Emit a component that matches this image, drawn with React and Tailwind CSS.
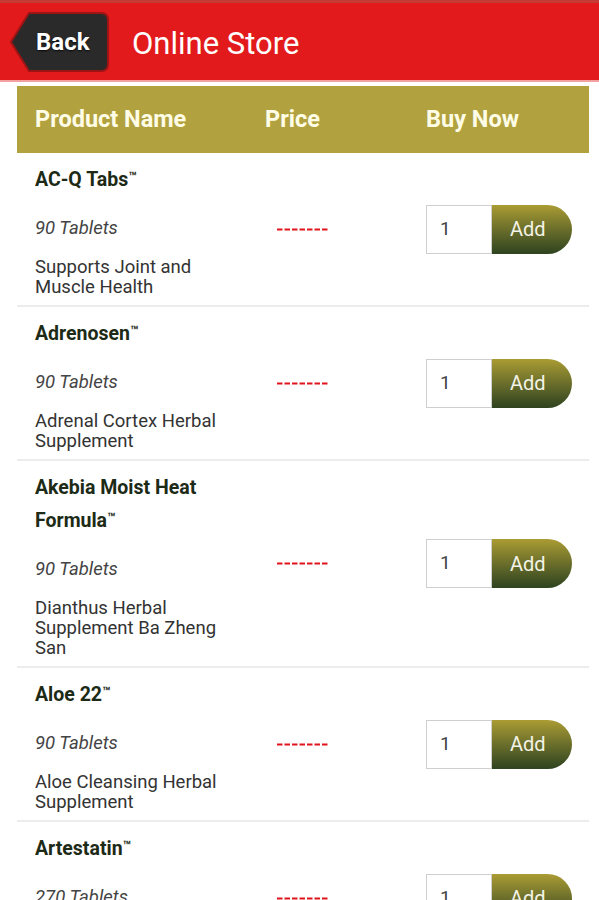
const products = [
  { name: ["AC-Q Tabs"], count: "90 Tablets", desc: ["Supports Joint and", "Muscle Health"] },
  { name: ["Adrenosen"], count: "90 Tablets", desc: ["Adrenal Cortex Herbal", "Supplement"] },
  { name: ["Akebia Moist Heat", "Formula"], count: "90 Tablets", desc: ["Dianthus Herbal", "Supplement Ba Zheng", "San"] },
  { name: ["Aloe 22"], count: "90 Tablets", desc: ["Aloe Cleansing Herbal", "Supplement"] },
  { name: ["Artestatin"], count: "270 Tablets", desc: ["Antiparasitic Herbal", "Supplement"] },
];

function BackButton() {
  return (
    <div className="relative w-[101px] h-[62px] flex items-center pl-[27px]">
      {/* arrow shaped backing */}
      <svg className="absolute inset-0" width="101" height="62" viewBox="0 0 101 62">
        <path d="M2 31 L20 2 H92 Q99 2 99 9 V53 Q99 60 92 60 H20 Z" fill="#2a2a2b" stroke="#9c1414" strokeWidth="2" />
      </svg>
      <span className="relative text-white text-[24px] font-bold [text-shadow:0_1px_2px_rgba(0,0,0,0.8)]">Back</span>
    </div>
  );
}

function PriceDash() {
  return (
    <svg width="52" height="3" viewBox="0 0 52 3">
      <line x1="0" y1="1.5" x2="52" y2="1.5" stroke="#e0141c" strokeWidth="2" strokeDasharray="5.5 2" />
    </svg>
  );
}

function ProductRow({ p }) {
  return (
    <div className="grid grid-cols-[238px_171px_1fr] border-b-2 border-[#ececec]">
      <div className="pl-[18px] pr-1 pt-[10px] pb-[8px]">
        <div className="text-[19.5px] font-bold leading-[33px] text-[#1c2a16]">
          {p.name.map((line, i) => (
            <div key={i}>
              {line}
              {i === p.name.length - 1 && <span className="text-[13px] relative top-[-5px]">™</span>}
            </div>
          ))}
        </div>
        <div className="mt-[20px] text-[18.5px] italic leading-[20px] text-[#444]">{p.count}</div>
        <div className="mt-[19px] text-[18.5px] leading-[20px] text-[#333]">
          {p.desc.map((line, i) => (
            <div key={i}>{line}</div>
          ))}
        </div>
      </div>
      <div className="flex items-center pl-[22px]">
        <PriceDash />
      </div>
      <div className="flex items-center">
        <div className="w-[66px] h-[49px] border border-[#cfcfcf] bg-white flex items-center pl-[13px] text-[19px] text-[#444]">1</div>
        <div className="w-[80px] h-[49px] rounded-r-full bg-gradient-to-b from-[#ab9c33] to-[#2e431f] flex items-center pl-[18px] text-[20px] text-[#f3f3e6]">
          Add
        </div>
      </div>
    </div>
  );
}

export default function App() {
  return (
    <div className="w-[599px] h-[900px] overflow-hidden bg-white font-['Roboto',sans-serif]">
      {/* Top bar */}
      <header className="h-[82px] bg-[#e21a1c] border-t-[3px] border-[#c63a35] border-b-2 border-b-[#f2a0a0] flex items-center pl-[9px]">
        <BackButton />
        <h1 className="ml-[22px] mt-[4px] text-white text-[31px] leading-none">Online Store</h1>
      </header>

      <div className="mx-[17px] mt-[4px] w-[572px]">
        {/* Table header */}
        <div className="grid grid-cols-[238px_171px_1fr] h-[67px] bg-[#b2a23f] items-center text-[23.5px] font-bold text-[#fffde6]">
          <div className="pl-[18px]">Product Name</div>
          <div className="pl-[10px]">Price</div>
          <div>Buy Now</div>
        </div>

        {products.map((p, i) => (
          <ProductRow key={i} p={p} />
        ))}
      </div>
    </div>
  );
}
